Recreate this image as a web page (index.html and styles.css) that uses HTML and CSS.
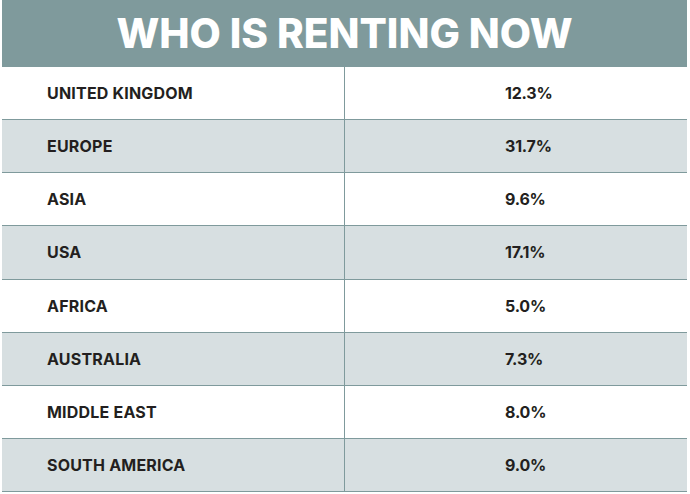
FILE: index.html
```html
<!DOCTYPE html>
<html>
<head>
<meta charset="utf-8">
<link rel="stylesheet" href="styles.css">
</head>
<body>
<div class="table">
  <div class="title">WHO IS RENTING NOW</div>
  <div class="row"><div class="name">UNITED KINGDOM</div><div class="val">12.3%</div></div>
  <div class="row alt"><div class="name">EUROPE</div><div class="val">31.7%</div></div>
  <div class="row"><div class="name">ASIA</div><div class="val">9.6%</div></div>
  <div class="row alt"><div class="name">USA</div><div class="val">17.1%</div></div>
  <div class="row"><div class="name">AFRICA</div><div class="val">5.0%</div></div>
  <div class="row alt"><div class="name">AUSTRALIA</div><div class="val">7.3%</div></div>
  <div class="row"><div class="name">MIDDLE EAST</div><div class="val">8.0%</div></div>
  <div class="row alt"><div class="name">SOUTH AMERICA</div><div class="val">9.0%</div></div>
</div>
</body>
</html>
```
FILE: styles.css
```css
html, body {
  margin: 0;
  padding: 0;
  background: #ffffff;
}
.table {
  margin-left: 2px;
  width: 685px;
  font-family: Inter, "Liberation Sans", sans-serif;
  color: #231f20;
}
.title {
  height: 67px;
  background: #7f9a9c;
  color: #ffffff;
  font-size: 40.5px;
  font-weight: 800;
  letter-spacing: 0;
  display: flex;
  align-items: center;
  justify-content: center;
  padding-bottom: 1px;
  box-sizing: border-box;
}
.row {
  display: grid;
  grid-template-columns: 342px 1px 1fr;
  height: 53.125px;
  box-sizing: border-box;
  border-bottom: 1px solid #7f9a9c;
}
.row::before {
  content: "";
  grid-column: 2;
  grid-row: 1;
  background: #7f9a9c;
}
.row.alt {
  background: #d7dfe1;
}
.name, .val {
  grid-row: 1;
  display: flex;
  align-items: center;
  font-size: 16px;
  font-weight: 700;
}
.name {
  grid-column: 1;
  padding-left: 45px;
  letter-spacing: 0.2px;
}
.val {
  grid-column: 3;
  padding-left: 160px;
  letter-spacing: -0.2px;
}
```
